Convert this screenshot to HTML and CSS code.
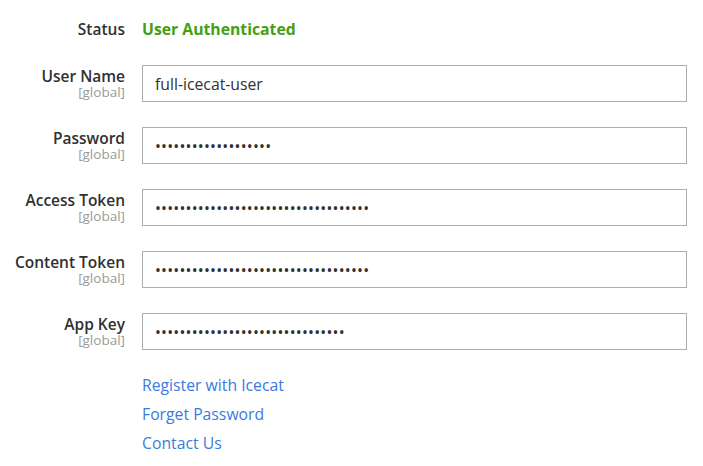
FILE: index.html
```html
<!DOCTYPE html>
<html lang="en">
<head>
<meta charset="utf-8">
<title>Icecat Settings</title>
<link rel="stylesheet" href="styles.css">
</head>
<body>
<div class="form">
  <div class="row row-status">
    <div class="label"><span class="label-text">Status</span></div>
    <div class="control"><span class="status-ok">User Authenticated</span></div>
  </div>
  <div class="row">
    <div class="label"><span class="label-text">User Name</span><span class="scope">[global]</span></div>
    <div class="control"><input class="input" type="text" value="full-icecat-user"></div>
  </div>
  <div class="row">
    <div class="label"><span class="label-text">Password</span><span class="scope">[global]</span></div>
    <div class="control"><input class="input input-secret" type="password" value="abcdefghijklmnopqrs"></div>
  </div>
  <div class="row">
    <div class="label"><span class="label-text">Access Token</span><span class="scope">[global]</span></div>
    <div class="control"><input class="input input-secret" type="password" value="abcdefghijklmnopqrstuvwxyz012345678"></div>
  </div>
  <div class="row">
    <div class="label"><span class="label-text">Content Token</span><span class="scope">[global]</span></div>
    <div class="control"><input class="input input-secret" type="password" value="abcdefghijklmnopqrstuvwxyz012345678"></div>
  </div>
  <div class="row">
    <div class="label"><span class="label-text">App Key</span><span class="scope">[global]</span></div>
    <div class="control"><input class="input input-secret" type="password" value="abcdefghijklmnopqrstuvwxyz01234"></div>
  </div>
  <div class="row row-links">
    <div class="label"></div>
    <div class="control links">
      <a class="link" href="#">Register with Icecat</a>
      <a class="link" href="#">Forget Password</a>
      <a class="link" href="#">Contact Us</a>
    </div>
  </div>
</div>
</body>
</html>
```
FILE: styles.css
```css
html, body {
  margin: 0;
  padding: 0;
  background: #ffffff;
}
body {
  font-family: "Open Sans", "Liberation Sans", sans-serif;
  font-size: 15.75px;
  color: #303030;
  width: 703px;
  height: 466px;
  overflow: hidden;
}
.form {
  display: flex;
  flex-direction: column;
  gap: 25px;
  padding-top: 19px;
}
.row {
  display: flex;
  gap: 17px;
  align-items: flex-start;
}
.row-status {
  height: 21px;
}
.label {
  width: 125px;
  flex: none;
  display: flex;
  flex-direction: column;
  align-items: flex-end;
  text-align: right;
  padding-top: 1px;
}
.row-status .label {
  padding-top: 0;
}
.label-text {
  font-size: 15.5px;
  font-weight: 600;
  line-height: 21px;
  color: #303030;
}
.scope {
  font-size: 13.5px;
  line-height: 14px;
  margin-top: -2px;
  color: #9a9a9a;
}
.control {
  width: 545px;
  flex: none;
  line-height: 21px;
}
.status-ok {
  font-size: 15.75px;
  font-weight: 700;
  line-height: 21px;
  color: #43a014;
}
.input {
  display: block;
  box-sizing: border-box;
  width: 545px;
  height: 37px;
  margin: 0;
  padding: 0 12px;
  border: 1px solid #adadad;
  border-radius: 0;
  background: #ffffff;
  font-family: "Open Sans", "Liberation Sans", sans-serif;
  font-size: 15.75px;
  color: #303030;
  outline: none;
}
.input-secret {
  letter-spacing: 0.2px;
}
.row-links {
  margin-top: -4px;
}
.links {
  display: flex;
  flex-direction: column;
  align-items: flex-start;
}
.link {
  font-size: 15.75px;
  line-height: 29px;
  color: #3a7bdc;
  text-decoration: none;
}
```
